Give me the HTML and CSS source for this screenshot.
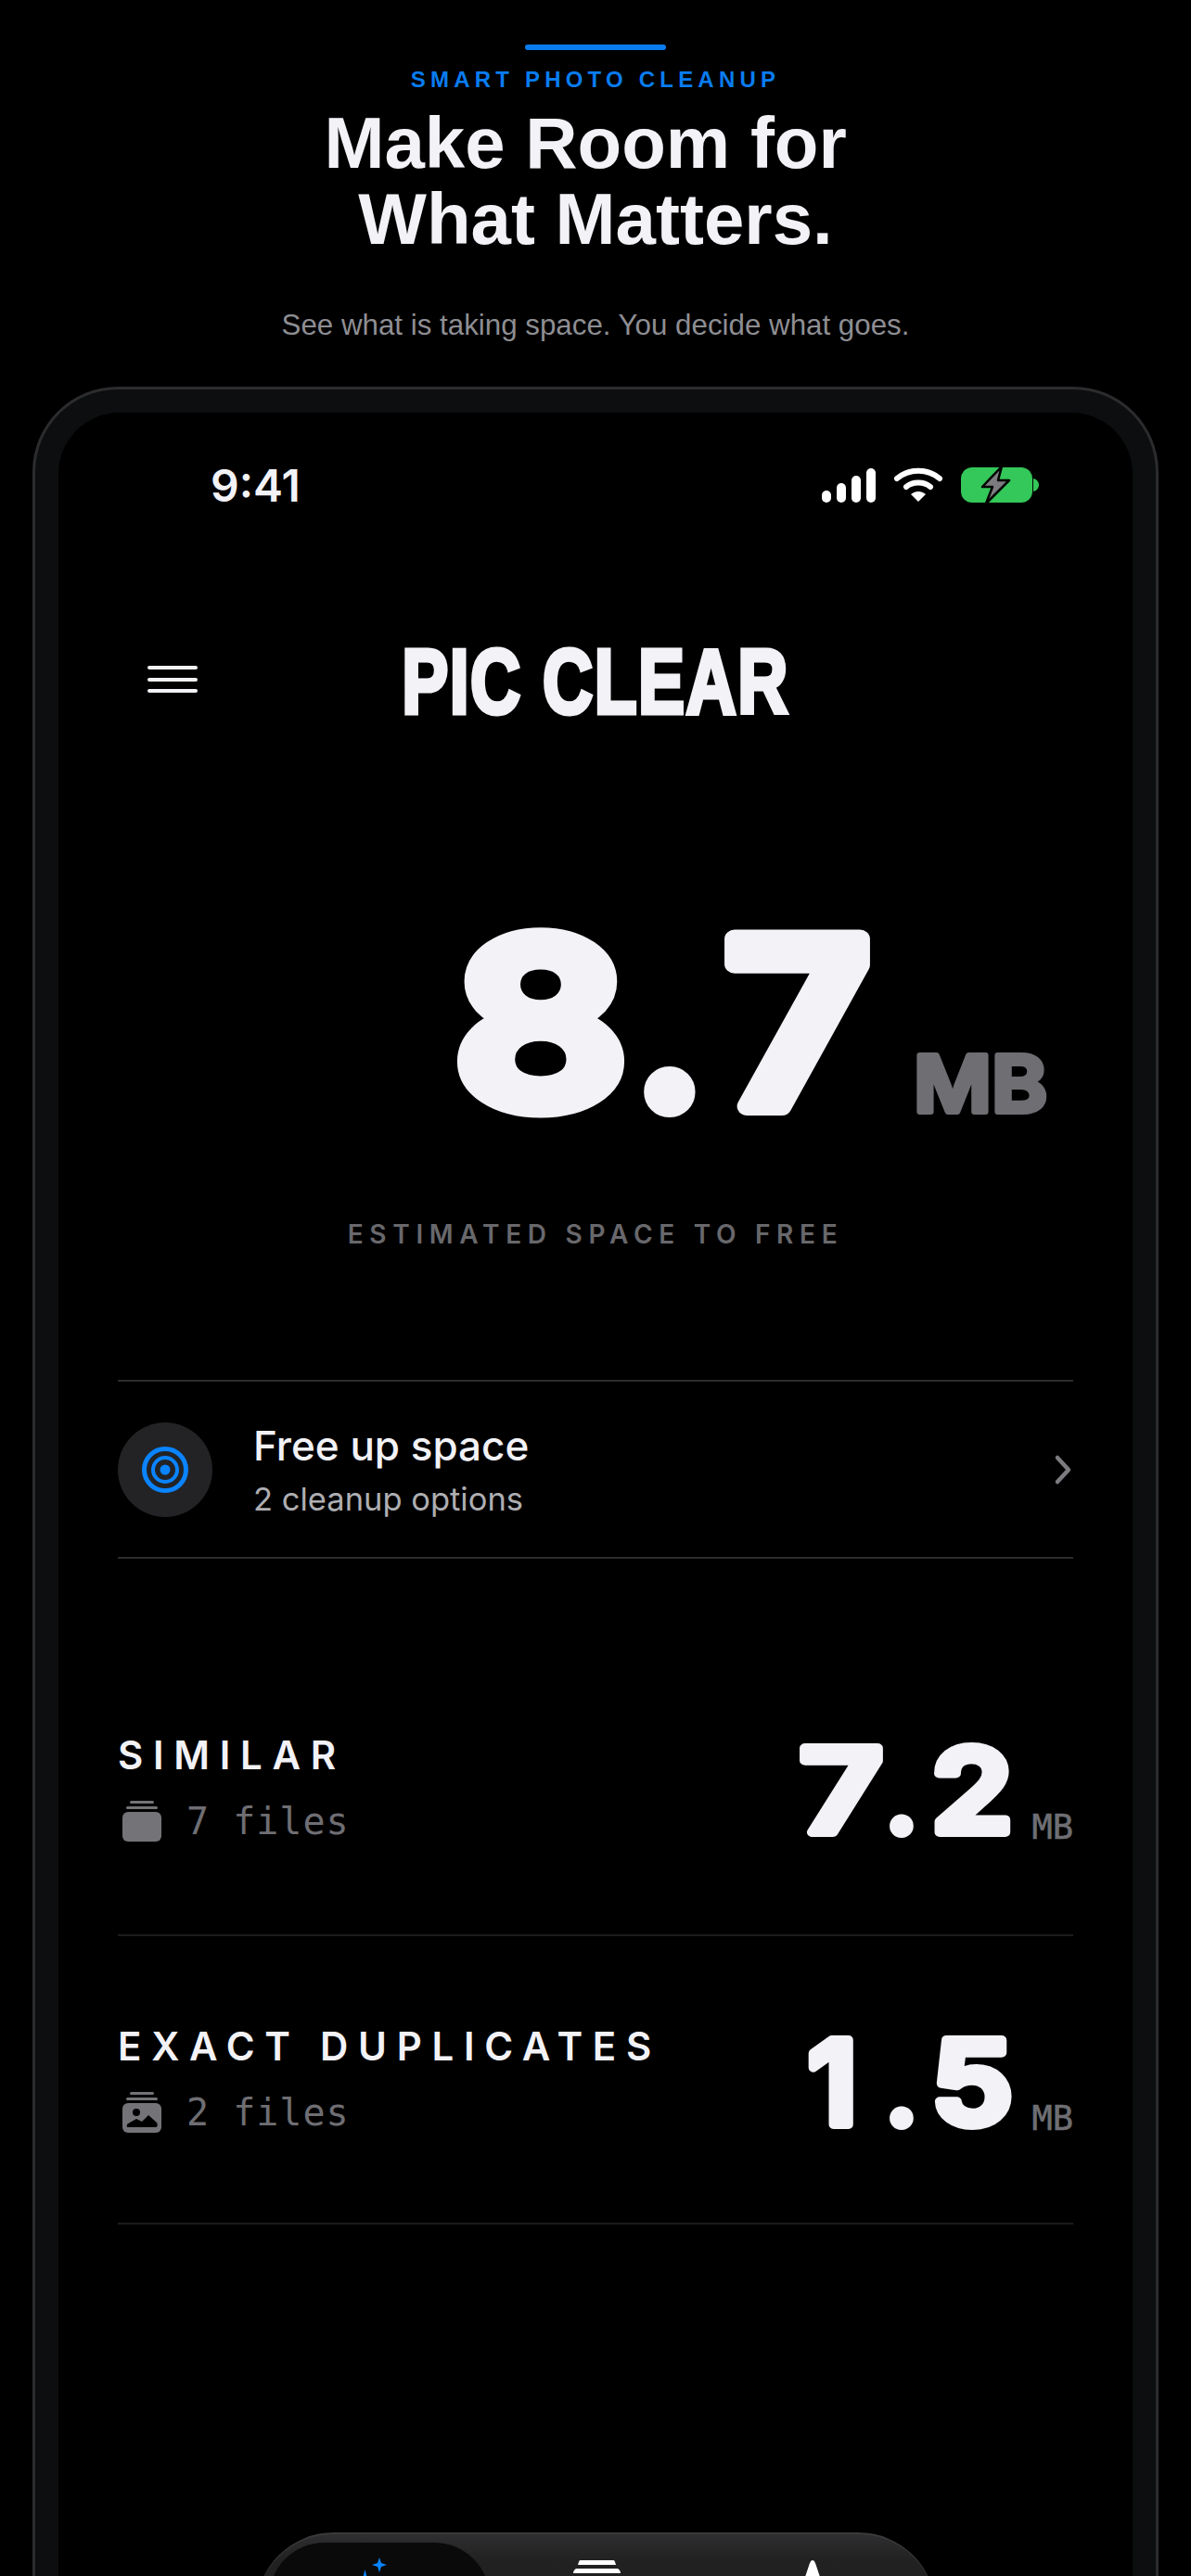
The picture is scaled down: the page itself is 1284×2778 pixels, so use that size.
FILE: index.html
```html
<!doctype html>
<html lang="en">

<head>
    <meta charset="utf8">
    <meta name="viewport" content="width=device-width, initial-scale=1">
    <title>Pic Clear</title>
    <link rel="stylesheet" href="styles.css">
</head>

<body>
    <header class="promo">
        <div class="promo-bar"></div>
        <p class="promo-tag">SMART PHOTO CLEANUP</p>
        <h1>Make Room for&nbsp;<br>What Matters.</h1>
        <p class="promo-sub">See what is taking space. You decide what goes.</p>
    </header>

    <section class="phone">
        <div class="screen">
            <div class="status">
                <span class="clock">9:41</span>
                <div class="status-icons">
                    <svg width="58" height="37" viewBox="0 0 58 37" fill="#fff">
                        <rect x="0" y="24" width="10" height="13" rx="5" />
                        <rect x="16" y="16" width="10" height="21" rx="5" />
                        <rect x="32" y="8" width="10" height="29" rx="5" />
                        <rect x="48" y="0" width="10" height="37" rx="5" />
                    </svg>
                    <svg width="52" height="36" viewBox="0 0 52 36" fill="none" stroke="#fff" stroke-width="6" stroke-linecap="round">
                        <path d="M3 11C16 0 36 0 49 11" />
                        <path d="M13 20C20 14 32 14 39 20" />
                        <path d="M26 36L18 28C23 24 29 24 34 28Z" fill="#fff" stroke="none" />
                    </svg>
                    <svg width="85" height="40" viewBox="0 0 85 40">
                        <rect x="0" y="1" width="77" height="38" rx="12" fill="#34c759" />
                        <path d="M78 13C82 14 84 17 84 20C84 23 82 26 78 27Z" fill="#34c759" />
                        <path d="M44 0L23 22H34L27 40L52 15H40Z" fill="#7c7c80" stroke="#000" stroke-width="2.5" stroke-linejoin="round" />
                    </svg>
                </div>
            </div>

            <div class="nav">
                <div class="menu"><i></i><i></i><i></i></div>
                <span class="brand">PIC CLEAR</span>
            </div>

            <div class="total">
                <svg class="total-num" width="1030" height="230" viewBox="0 0 1030 230">
                    <text class="round-num big" y="204"><tspan x="363" textLength="186" lengthAdjust="spacingAndGlyphs">8</tspan><tspan class="dot" x="559">.</tspan><tspan x="654" textLength="157" lengthAdjust="spacingAndGlyphs">7</tspan></text>
                    <text class="round-unit" x="858" y="210" textLength="144" lengthAdjust="spacingAndGlyphs">MB</text>
                </svg>
                <p class="total-label">ESTIMATED SPACE TO FREE</p>
            </div>

            <div class="action">
                <div class="action-icon">
                    <svg width="54" height="54" viewBox="0 0 54 54" fill="none" stroke="#0a84ff">
                        <circle cx="27" cy="27" r="22.5" stroke-width="5" />
                        <circle cx="27" cy="27" r="13" stroke-width="4" />
                        <circle cx="27" cy="27" r="5.5" fill="#0a84ff" stroke="none" />
                    </svg>
                </div>
                <div class="action-text">
                    <div class="action-title">Free up space</div>
                    <div class="action-sub">2 cleanup options</div>
                </div>
                <svg width="20" height="32" viewBox="0 0 20 32" fill="none" stroke="#7c7c80" stroke-width="4.5" stroke-linecap="round" stroke-linejoin="round">
                    <path d="M3 3L15 16L3 29" />
                </svg>
            </div>

            <div class="row row-first">
                <div class="row-left">
                    <div class="row-name">SIMILAR</div>
                    <div class="row-files">
                        <svg width="42" height="44" viewBox="0 0 42 44" fill="#737378">
                            <rect x="8" y="0" width="26" height="3" rx="1.5" />
                            <rect x="4" y="6" width="34" height="3" rx="1.5" />
                            <rect x="0" y="12" width="42" height="32" rx="6" />
                        </svg>
                        <span>7 files</span>
                    </div>
                </div>
                <div class="row-size">
                    <svg width="254" height="120" viewBox="0 0 254 120">
                        <text class="round-num" y="110"><tspan x="4" textLength="90" lengthAdjust="spacingAndGlyphs">7</tspan><tspan class="dot" x="98">.</tspan><tspan x="146" textLength="88" lengthAdjust="spacingAndGlyphs">2</tspan></text>
                    </svg>
                    <span class="unit">MB</span>
                </div>
            </div>

            <div class="row">
                <div class="row-left">
                    <div class="row-name">EXACT DUPLICATES</div>
                    <div class="row-files">
                        <svg width="42" height="44" viewBox="0 0 42 44" fill="#737378">
                            <rect x="8" y="0" width="26" height="3" rx="1.5" />
                            <rect x="4" y="6" width="34" height="3" rx="1.5" />
                            <rect x="0" y="12" width="42" height="32" rx="6" />
                            <circle cx="15" cy="22" r="4" fill="#000" />
                            <path d="M5 38C4 35 6 34 8 33L15 29L21 32L28 25L37 33C38 35 38 38 36 38Z" fill="#000" />
                        </svg>
                        <span>2 files</span>
                    </div>
                </div>
                <div class="row-size">
                    <svg width="254" height="120" viewBox="0 0 254 120">
                        <text class="round-num" y="111"><tspan x="13">1</tspan><tspan class="dot" x="98">.</tspan><tspan x="146" textLength="88" lengthAdjust="spacingAndGlyphs">5</tspan></text>
                    </svg>
                    <span class="unit">MB</span>
                </div>
            </div>

            <nav class="tabbar">
                <div class="tab tab-active">
                    <svg width="60" height="19" viewBox="0 0 60 19" fill="#0a84ff">
                        <path d="M30 0L32 6L38 8L32 10L30 16L28 10L22 8L28 6Z" />
                        <path d="M14.5 13L19 30H10Z" />
                    </svg>
                </div>
                <div class="tab">
                    <svg width="51" height="16" viewBox="0 0 51 16" fill="#fff">
                        <path d="M8 0H43C45 0 45 2 46 5H5C6 2 6 0 8 0Z" />
                        <path d="M4 9H47C49 9 51 11 51 14H0C0 11 2 9 4 9Z" />
                    </svg>
                </div>
                <div class="tab">
                    <svg width="40" height="16" viewBox="0 0 40 16" fill="#fff">
                        <path d="M20 0C22 0 23 3 24 6L28 18H12L16 6C17 3 18 0 20 0Z" />
                    </svg>
                </div>
            </nav>
        </div>
    </section>
</body>

</html>
```

FILE: styles.css
```css
* {
    box-sizing: border-box;
}

html,
body,
h1,
p {
    margin: 0;
    padding: 0;
}

html {
    background-color: #000;
}

body {
    height: 2778px;
    overflow: hidden;
    background-color: #000;
    color: #f2f2f7;
    font-family: Inter, "Liberation Sans", sans-serif;
}

svg {
    display: block;
    flex-shrink: 0;
    overflow: visible;
}

/* top promo text */
.promo {
    display: flex;
    flex-direction: column;
    align-items: center;
    padding-top: 48px;
}

.promo-bar {
    width: 152px;
    height: 6px;
    border-radius: 3px;
    background-color: #0a7cf0;
}

.promo-tag {
    margin-top: 18px;
    font-family: "Liberation Sans", sans-serif;
    font-size: 24px;
    font-weight: bold;
    line-height: 28px;
    letter-spacing: 5.2px;
    color: #0a7cf0;
}

h1 {
    margin-top: 13px;
    font-family: "Liberation Sans", sans-serif;
    font-size: 78px;
    line-height: 82px;
    font-weight: bold;
    text-align: center;
}

.promo-sub {
    margin-top: 56px;
    font-family: "Liberation Sans", sans-serif;
    font-size: 31.3px;
    line-height: 36px;
    color: #8e8e93;
}

/* device frame */
.phone {
    margin: 48px 35px 0;
    height: 2400px;
    padding: 25px 25px 0;
    border: 3px solid #2c2c2e;
    border-bottom: none;
    border-radius: 92px 92px 0 0;
    background-color: #0c0e0f;
}

.screen {
    height: 2400px;
    padding: 0 64px;
    border-radius: 66px 66px 0 0;
    background-color: #000;
}

.status {
    display: flex;
    justify-content: space-between;
    align-items: center;
    height: 154px;
    padding: 2px 36px 0 100px;
}

.clock {
    font-size: 48px;
    font-weight: 600;
}

.status-icons {
    display: flex;
    align-items: center;
    gap: 20px;
}

.nav {
    position: relative;
    display: flex;
    justify-content: center;
    margin-top: 92px;
}

.menu {
    position: absolute;
    left: 32px;
    top: 27px;
    display: flex;
    flex-direction: column;
    gap: 8.5px;
}

.menu i {
    display: block;
    width: 54px;
    height: 4px;
    border-radius: 2px;
    background-color: #f2f2f7;
}

.brand {
    display: inline-block;
    transform: scaleX(0.765);
    font-family: "Liberation Sans", sans-serif;
    font-size: 98px;
    line-height: 88px;
    font-weight: bold;
    letter-spacing: 2px;
    -webkit-text-stroke: 5px #f2f2f7;
}

.total {
    display: flex;
    flex-direction: column;
    align-items: center;
    margin-top: 210px;
}

.round-num {
    font-family: Inter, sans-serif;
    font-size: 125px;
    font-weight: 600;
    fill: #f2f2f7;
    stroke: #f2f2f7;
    stroke-width: 10px;
    stroke-linejoin: round;
}

.round-num .dot {
    font-size: 100px;
}

.round-num.big {
    font-size: 248px;
    stroke-width: 20px;
}

.round-num.big .dot {
    font-size: 225px;
}

.round-unit {
    font-family: Inter, sans-serif;
    font-size: 84px;
    font-weight: 600;
    fill: #6e6e73;
    stroke: #6e6e73;
    stroke-width: 6px;
    stroke-linejoin: round;
}

.total-label {
    margin-top: 95px;
    font-size: 28px;
    font-weight: 600;
    line-height: 34px;
    letter-spacing: 6.7px;
    color: #68686c;
}

.action {
    display: flex;
    align-items: center;
    height: 193px;
    margin-top: 140px;
    border-top: 2px solid #2c2c2e;
    border-bottom: 2px solid #2c2c2e;
}

.action-icon {
    display: flex;
    align-items: center;
    justify-content: center;
    width: 102px;
    height: 102px;
    border-radius: 50%;
    background-color: #232325;
}

.action-text {
    flex: 1;
    margin-left: 44px;
}

.action-title {
    font-size: 44px;
    line-height: 54px;
    font-weight: 550;
}

.action-sub {
    margin-top: 10px;
    font-size: 34.5px;
    line-height: 42px;
    color: #aeaeb2;
}

.row {
    display: flex;
    justify-content: space-between;
    align-items: flex-end;
    height: 311px;
    padding-bottom: 97px;
    border-bottom: 2px solid #1c1c1e;
}

.row-first {
    margin-top: 96px;
    padding-bottom: 100px;
}

.row-name {
    font-size: 42px;
    line-height: 48px;
    font-weight: 600;
    letter-spacing: 10.7px;
}

.row-files {
    display: flex;
    align-items: center;
    gap: 27px;
    margin-top: 25px;
    padding-left: 5px;
    font-family: "DejaVu Sans Mono", monospace;
    font-size: 40px;
    letter-spacing: 1px;
    color: #6e6e73;
}

.row-files span {
    margin-bottom: 1px;
    line-height: 34px;
}

.row-size {
    display: flex;
    align-items: flex-end;
}

.unit {
    margin-bottom: -3px;
    font-family: "DejaVu Sans Mono", monospace;
    font-size: 37px;
    line-height: 36px;
    color: #6e6e73;
    -webkit-text-stroke: 0.6px #6e6e73;
}

/* bottom tab bar, cut off by the window */
.tabbar {
    display: flex;
    align-items: flex-start;
    width: 733px;
    height: 160px;
    margin: 332px auto 0;
    padding: 9px 16px 0 14px;
    border-top: 2px solid #3a3a3c;
    border-radius: 84px 84px 0 0;
    background: linear-gradient(#2e2e30, #212122 30px);
}

.tab {
    flex: 1;
    display: flex;
    justify-content: center;
    padding-top: 19px;
}

.tab-active {
    flex: 0 0 238px;
    height: 120px;
    padding-top: 16px;
    border-radius: 70px;
    background-color: #0a0a0a;
}
```
